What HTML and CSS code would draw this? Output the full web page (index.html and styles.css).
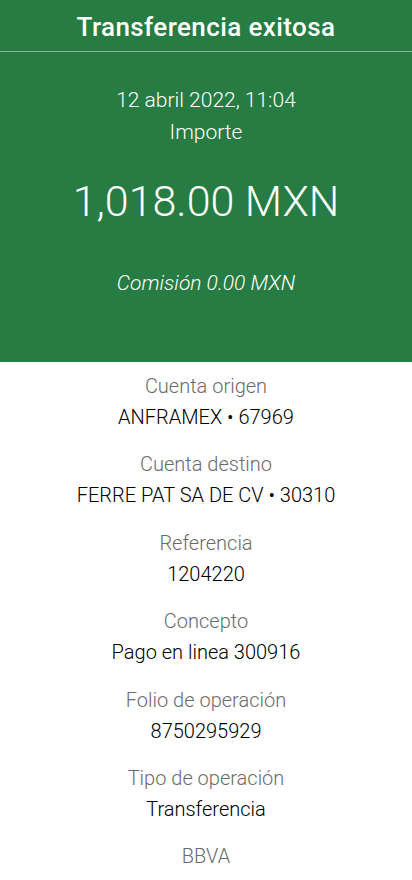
FILE: index.html
```html
<!DOCTYPE html>
<html lang="es">
<head>
    <meta charset="UTF-8">
    <title>Transferencia exitosa</title>
    <link rel="stylesheet" href="styles.css">
</head>
<body>

    <!-- Encabezado verde -->
    <div class="top">
        <h1 class="titulo">Transferencia exitosa</h1>
        <div class="resumen">
            <p class="fecha">12 abril 2022, 11:04</p>
            <p class="etiqueta-importe">Importe</p>
            <p class="importe">1,018.00 MXN</p>
            <p class="comision">Comisión 0.00 MXN</p>
        </div>
    </div>

    <!-- Detalle -->
    <div class="detalle">
        <div class="dato">
            <p class="label">Cuenta origen</p>
            <p class="valor">ANFRAMEX • 67969</p>
        </div>
        <div class="dato">
            <p class="label">Cuenta destino</p>
            <p class="valor">FERRE PAT SA DE CV • 30310</p>
        </div>
        <div class="dato">
            <p class="label">Referencia</p>
            <p class="valor">1204220</p>
        </div>
        <div class="dato">
            <p class="label">Concepto</p>
            <p class="valor">Pago en linea 300916</p>
        </div>
        <div class="dato">
            <p class="label">Folio de operación</p>
            <p class="valor">8750295929</p>
        </div>
        <div class="dato">
            <p class="label">Tipo de operación</p>
            <p class="valor">Transferencia</p>
        </div>
        <div class="dato">
            <p class="label">BBVA</p>
        </div>
    </div>

</body>
</html>
```

FILE: styles.css
```css
body {
    margin: 0;
    font-family: Roboto, "Noto Sans", sans-serif;
    background-color: #ffffff;
}
p {
    margin: 0;
}
.top {
    background-color: #267c42;
    color: #ffffff;
    height: 362px;
}
.titulo {
    margin: 0;
    height: 51px;
    line-height: 54px;
    font-size: 26px;
    font-weight: 500;
    letter-spacing: 0.4px;
    text-align: center;
    border-bottom: 1px solid rgba(255, 255, 255, 0.45);
}
.resumen {
    text-align: center;
    padding-top: 32px;
}
.fecha, .etiqueta-importe {
    font-size: 21px;
    font-weight: 300;
    line-height: 32px;
}
.importe {
    font-size: 43px;
    font-weight: 300;
    line-height: 52px;
    margin-top: 27px;
}
.comision {
    font-size: 21px;
    font-style: italic;
    font-weight: 300;
    margin-top: 44px;
}
.detalle {
    text-align: center;
    padding-top: 9px;
}
.dato {
    margin-bottom: 16.4px;
}
.label {
    font-size: 20px;
    font-weight: 300;
    color: #6b6b6b;
    line-height: 31px;
}
.valor {
    font-size: 20px;
    font-weight: 300;
    color: #000000;
    line-height: 31px;
}
```
